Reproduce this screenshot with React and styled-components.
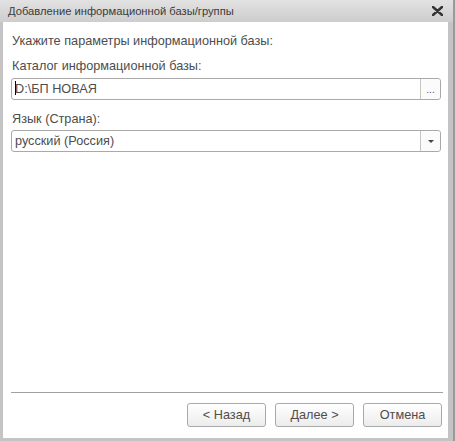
import styled, { createGlobalStyle } from 'styled-components'

const GlobalStyle = createGlobalStyle`
  html, body {
    margin: 0;
    padding: 0;
    background: #ffffff;
  }
  * {
    box-sizing: border-box;
  }
`;

// Outer window with grey frame
const Window = styled.div`
  width: 455px;
  height: 441px;
  display: flex;
  flex-direction: column;
  background: #c4c4c4;
  border-right: 2px solid #9a9a9a;
  font-family: Arial, "Liberation Sans", sans-serif;
  color: #4d4d4d;
`;

const TitleBar = styled.div`
  height: 22px;
  display: flex;
  align-items: center;
  justify-content: space-between;
  padding: 0 10px 0 8px;
  background: linear-gradient(#e2e2e2, #cdcdcd);
  font-size: 11.2px;
  color: #3a3a3a;
`;

const CloseButton = styled.div`
  width: 12px;
  height: 12px;
  display: flex;
  align-items: center;
  justify-content: center;
`;

const Body = styled.div`
  flex: 1;
  display: flex;
  flex-direction: column;
  margin: 0 5px 3px 3px;
  background: #ffffff;
  padding: 11px 6px 0 8px;
`;

const Label = styled.div`
  font-size: 12.7px;
  height: 16px;
  line-height: 16px;
  padding-left: 1px;
  margin-bottom: ${p => p.$gap || 0}px;
`;

const Field = styled.div`
  height: 22px;
  display: flex;
  border: 1px solid #a9a9a9;
  border-radius: 3px;
  margin-bottom: ${p => p.$gap || 0}px;
  margin-right: 1px;
`;

const FieldText = styled.div`
  flex: 1;
  font-size: 12.7px;
  line-height: 20px;
  padding-left: 3px;
  color: #4d4d4d;
`;

const Caret = styled.span`
  display: inline-block;
  width: 1px;
  height: 14px;
  background: #000;
  vertical-align: -2px;
  margin-right: -1px;
`;

const FieldButton = styled.div`
  width: 20px;
  border-left: 1px solid #c4c4c4;
  display: flex;
  align-items: center;
  justify-content: center;
  font-size: 10px;
  color: #555;
  background: #fbfbfb;
  border-radius: 0 3px 3px 0;
`;

const Arrow = styled.div`
  width: 0;
  height: 0;
  border-left: 3px solid transparent;
  border-right: 3px solid transparent;
  border-top: 3px solid #444;
`;

const Spacer = styled.div`
  flex: 1;
`;

const Separator = styled.div`
  height: 1px;
  background: #a0a0a0;
  margin-right: -1px;
`;

const Footer = styled.div`
  display: flex;
  justify-content: flex-end;
  gap: 9px;
  padding: 10px 0 0 0;
  height: 45px;
`;

const Button = styled.div`
  width: 79px;
  height: 24px;
  border: 1px solid #a9a9a9;
  border-radius: 3px;
  background: linear-gradient(#ffffff, #ececec);
  display: flex;
  align-items: center;
  justify-content: center;
  font-size: 12.7px;
  color: #4d4d4d;
`;

export default function App() {
  return (
    <>
      <GlobalStyle />
      <Window>
        <TitleBar>
          <span>Добавление информационной базы/группы</span>
          <CloseButton>
            <svg width="11" height="10" viewBox="0 0 11 10">
              <path d="M1 1 L10 9 M10 1 L1 9" stroke="#333" strokeWidth="2.4" strokeLinecap="round" />
            </svg>
          </CloseButton>
        </TitleBar>
        <Body>
          <Label $gap={9}>Укажите параметры информационной базы:</Label>
          <Label $gap={4}>Каталог информационной базы:</Label>
          <Field $gap={11}>
            <FieldText><Caret />D:\БП НОВАЯ</FieldText>
            <FieldButton>...</FieldButton>
          </Field>
          <Label $gap={3}>Язык (Страна):</Label>
          <Field>
            <FieldText>русский (Россия)</FieldText>
            <FieldButton><Arrow /></FieldButton>
          </Field>
          <Spacer />
          <Separator />
          <Footer>
            <Button>&lt; Назад</Button>
            <Button>Далее &gt;</Button>
            <Button>Отмена</Button>
          </Footer>
        </Body>
      </Window>
    </>
  )
}
